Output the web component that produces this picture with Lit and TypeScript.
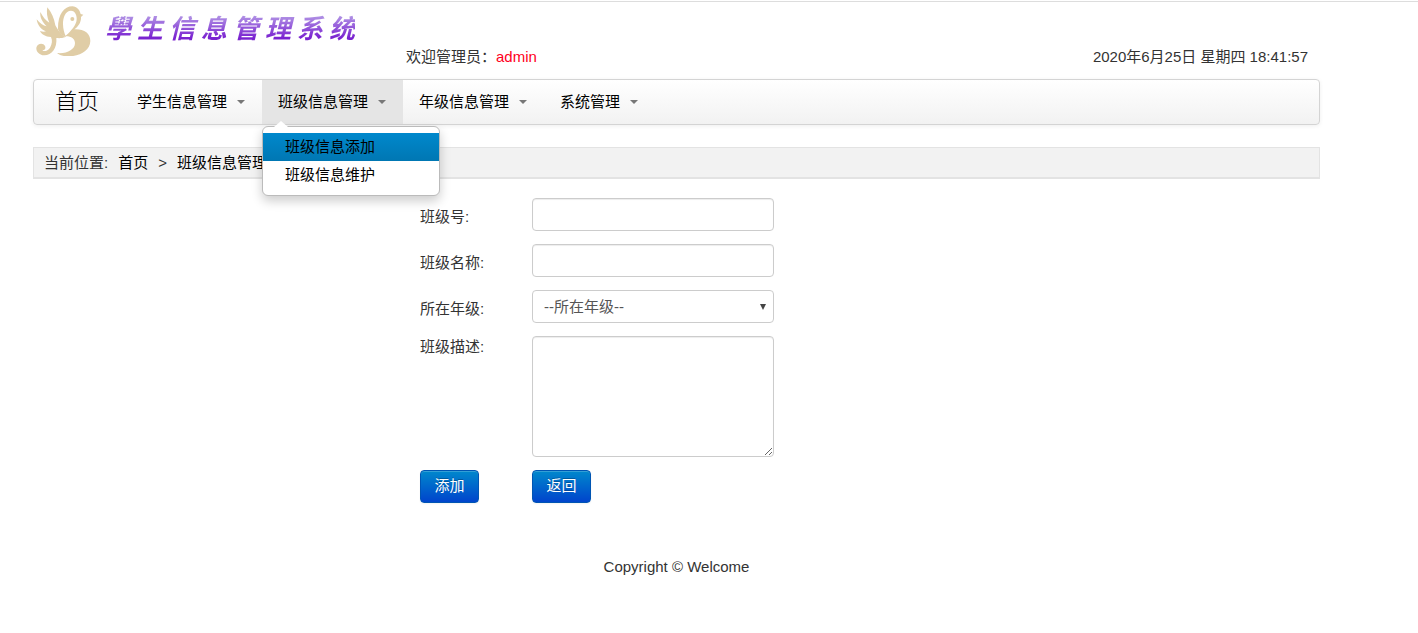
import { LitElement, html, css } from "lit";
import { customElement, state } from "lit/decorators.js";

interface Menu { title: string; items: string[]; }

@customElement("app-root")
export class AppRoot extends LitElement {
  static styles = css`
    :host { display: block; border-top: 1px solid #fff; color: #333;
      font: 15px/22px "Liberation Sans", "Noto Sans CJK SC", sans-serif; }
    * { box-sizing: border-box; }
    a { color: #000; text-decoration: none; }
    .page { border-top: 1px solid #ddd; padding: 0 98px 0 33px; }
    .top { display: flex; align-items: flex-end; height: 77px; padding-right: 12px; }
    .brand { display: flex; align-items: flex-start; width: 373px; height: 77px; gap: 12px; padding: 3px 0 0 3px; }
    .bird { width: 57px; height: 51px; flex: none; }
    .wordmark { display: flex; gap: 6px; margin: 4px 0 0; font-size: 26px; line-height: 36px; font-style: italic; font-weight: 700;
      font-family: "Noto Sans CJK SC", sans-serif; color: transparent;
      background: linear-gradient(#b49ae6 15%, #7a22d0 80%); -webkit-background-clip: text; background-clip: text; }
    .user { flex: 1; padding-bottom: 11px; }
    .name { color: #ff0022; }
    .clock { padding-bottom: 11px; }
    .nav { display: flex; height: 46px; border: 1px solid #d4d4d4; border-radius: 4px;
      background: linear-gradient(#fff, #f2f2f2); box-shadow: 0 1px 4px rgba(0,0,0,.067); }
    .home { padding: 0 22px 0 21px; font-size: 22px; line-height: 44px; font-weight: 300; }
    .menus { display: flex; margin: 0; padding: 0; list-style: none; }
    .menu { position: relative; }
    .toggle { display: flex; align-items: center; gap: 10px; height: 44px; padding: 0 17px 0 16px; border: 0;
      background: none; color: #000; font: inherit; }
    .toggle::after { content: ""; border: 4px solid transparent; border-top-color: #777; border-bottom: 0; }
    .open .toggle { background: #e5e5e5; }
    .drop { position: absolute; z-index: 2; top: 46px; left: 0; width: 178px; margin: 0; padding: 6px 0; list-style: none;
      background: #fff; border: 1px solid #bbb; border-radius: 6px; box-shadow: 0 5px 11px rgba(0,0,0,.2); }
    .drop::before { content: ""; position: absolute; top: -6px; left: 11px; border: 7px solid transparent; border-top: 0; border-bottom: 6px solid #fff; }
    .item { display: block; padding: 3px 22px; line-height: 22px; }
    .current { background: linear-gradient(#0088cc, #0077b3); }
    .crumbs { display: flex; gap: 10px; height: 32px; margin-top: 22px; padding: 0 10px; line-height: 30px;
      background: #f2f2f2; border: 1px solid #e3e3e3; border-bottom-width: 2px; }
    .form { display: grid; grid-template-columns: 112px 242px; row-gap: 13px; padding: 19px 0 0 387px; }
    .label { padding-top: 4px; line-height: 29px; }
    .tall { padding-top: 0; line-height: 22px; }
    .field { width: 100%; height: 33px; margin: 0; padding: 4px 7px; border: 1px solid #ccc; border-radius: 4px;
      background: #fff; color: #555; font: inherit; box-shadow: inset 0 1px 1px rgba(0,0,0,.075); }
    .area { height: 121px; display: block; }
    .pick { display: grid; align-items: center; }
    .pick > * { grid-area: 1 / 1; }
    .select { appearance: none; padding: 4px 11px; box-shadow: none; }
    .arrow { justify-self: end; width: 6px; height: 6px; margin-right: 8px; pointer-events: none; }
    .btn { justify-self: start; width: 59px; height: 33px; padding: 0 0 2px; border: 1px solid #0055b3; border-radius: 4px; color: #fff; font: inherit;
      background: linear-gradient(#0088cc, #0044cc); text-shadow: 0 -1px 0 rgba(0,0,0,.25);
      box-shadow: inset 0 1px 0 rgba(255,255,255,.2), 0 1px 2px rgba(0,0,0,.05); }
    .foot { margin: 53px 0 0; text-align: center; }
  `;

  @state() private opened = 1;

  private menus: Menu[] = [
    { title: "学生信息管理", items: [] },
    { title: "班级信息管理", items: ["班级信息添加", "班级信息维护"] },
    { title: "年级信息管理", items: [] },
    { title: "系统管理", items: [] },
  ];

  render() {
    return html`<div class="page">
      <header class="top">
        <div class="brand">
          <svg class="bird" viewBox="33 13 171 153" fill="#e0cda6" aria-hidden="true">
            <path d="M67 20C80 36 87 52 91 74C96 82 104 100 122 109C108 114 98 112 94 112C97 142 80 164 58 164C42 163 33 152 34 141C37 127 55 126 60 136C64 145 57 150 52 147C54 154 68 152 75 141C81 130 83 120 78 109C61 108 49 101 45 91C53 94 58 94 63 92C48 87 37 73 35 56C45 69 54 75 65 77C52 65 44 49 46 34C54 50 62 59 73 66C66 50 64 35 67 20Z"/>
            <path d="M99 86C98 42 117 17 142 17C156 18 164 28 167 40L175 42L168 49C169 64 161 77 148 86C178 85 196 98 196 121C195 150 165 167 130 167C115 167 104 164 96 157C125 160 150 147 150 127C149 113 138 106 120 107C132 96 149 80 154 63C158 45 150 30 138 30C121 30 114 50 114 70C114 84 118 98 123 109C112 106 103 96 99 86Z"/>
            <circle cx="142" cy="55" r="6"/>
          </svg>
          <h1 class="wordmark">${[..."學生信息管理系统"].map((c) => html`<span>${c}</span>`)}</h1>
        </div>
        <div class="user">欢迎管理员：<span class="name">admin</span></div>
        <time class="clock" datetime="2020-06-25T18:41:57">2020年6月25日 星期四 18:41:57</time>
      </header>
      <nav class="nav">
        <a class="home" href="#">首页</a>
        <ul class="menus">
          ${this.menus.map((m, i) => html`<li class="menu ${i === this.opened ? "open" : ""}">
            <button class="toggle" type="button" aria-expanded=${i === this.opened} @click=${() => (this.opened = i)}>${m.title}</button>
            ${i === this.opened && m.items.length ? html`<ul class="drop">
              ${m.items.map((t, n) => html`<li><a class="item ${n === 0 ? "current" : ""}" href="#">${t}</a></li>`)}
            </ul>` : ""}
          </li>`)}
        </ul>
      </nav>
      <div class="crumbs"><span>当前位置:</span><a href="#">首页</a><span>&gt;</span><a href="#">班级信息管理</a></div>
      <form class="form" @submit=${(e: Event) => e.preventDefault()}>
        <label class="label" for="no">班级号:</label><input class="field" id="no" type="text">
        <label class="label" for="title">班级名称:</label><input class="field" id="title" type="text">
        <label class="label" for="grade">所在年级:</label>
        <div class="pick">
          <select class="field select" id="grade"><option>--所在年级--</option></select>
          <svg class="arrow" viewBox="0 0 6 6" aria-hidden="true"><path d="M0 0H6L3 6Z" fill="#444"/></svg>
        </div>
        <label class="label tall" for="about">班级描述:</label><textarea class="field area" id="about"></textarea>
        <button class="btn" type="submit">添加</button><button class="btn" type="button">返回</button>
      </form>
      <footer class="foot">Copyright © Welcome</footer>
    </div>`;
  }
}
